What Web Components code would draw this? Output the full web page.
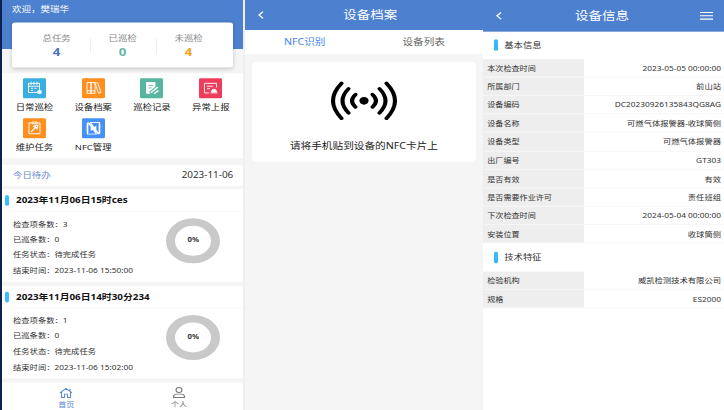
<!DOCTYPE html>
<html lang="zh-CN">
<head>
<meta charset="UTF-8">
<title>设备巡检</title>
<style>
body{
    margin: 0;
    width: 724px;
    height: 410px;
    overflow: hidden;
    background: #f5f5f5;
    font-family: "Noto Sans", "Noto Sans CJK SC", sans-serif;
}
</style>
</head>
<body>
<screen-board>
    <home-screen></home-screen>
    <archive-screen></archive-screen>
    <info-screen></info-screen>
</screen-board>

<script>
class baseElement extends HTMLElement{
    constructor(){
        super();
        this.attachShadow({mode:'open'});
    }
    connectedCallback(){
        let box= document.createElement('template')
        box.innerHTML=`<style>*{box-sizing:border-box}</style>` + this.render();
        this.shadowRoot.replaceChildren(box.content.cloneNode(true));
    }
}

// three screens side by side, squeezed a little in height
class screenBoard extends baseElement{
    render(){
        return `
        <style>
        :host{
            display: block;
            height: 410px;
            overflow: hidden;
        }
        .board{
            display: flex;
            width: 724px;
            height: 492px;
            padding-left: 2px;
            background: linear-gradient(90deg, #0b2250 2px, #eeeff1 2px);
            transform: scaleY(.83333);
            transform-origin: 0 0;
            line-height: 1;
            color: #333;
        }
        ::slotted(home-screen){ flex: 0 0 241px; margin-right: 2px; }
        ::slotted(archive-screen){ flex: 0 0 238px; }
        ::slotted(info-screen){ flex: 1; }
        </style>
        <div class="board"><slot></slot></div>`
    }
}
customElements.define('screen-board',screenBoard)

class titleBar extends baseElement{
    render(){
        return `
        <style>
        :host{
            display: flex;
            box-sizing: border-box;
            align-items: center;
            height: 36px;
            padding: 0 0 0 12px;
            background: #4d80cf;
            color: white;
        }
        .side{ flex: 1; display: flex; }
        .right{ justify-content: flex-end; }
        .name{ padding-top: 1px; font-size: 13.5px; white-space: nowrap; }
        :host([menu]) .name{ margin-right: 4px; }
        </style>
        <div class="side">
            <svg width="8" height="10" viewBox="0 0 8 10" fill="none" stroke="white" stroke-width="1.4"><path d="M6 1 2 5l4 4"/></svg>
        </div>
        <div class="name"><slot></slot></div>
        <div class="side right">${this.hasAttribute('menu') ? `
            <svg width="13" height="10" viewBox="0 0 13 10" stroke="white" stroke-width="1.3"><path d="M0 1h13M0 5h13M0 9h13"/></svg>` : ''}
        </div>`
    }
}
customElements.define('title-bar',titleBar)

class statItem extends baseElement{
    render(){
        return `
        <style>
        :host{
            display: flex;
            flex-direction: column;
            align-items: center;
            gap: 5px;
            width: 66px;
            padding-top: 3px;
            font-size: 9.4px;
            color: #888;
        }
        b{ font-size: 13.2px; color: ${this.getAttribute('color')}; }
        </style>
        <slot></slot><b>${this.getAttribute('count')}</b>`
    }
}
customElements.define('stat-item',statItem)

const icons = {
    daily: '<rect x="5.5" y="6" width="11" height="11"/><path d="M5.5 9.500h11M8 4v4M11 4v4M14 4v4M8 12h2M11.500 12h2M8 14.500h2"/><circle cx="16.500" cy="16.500" r="2.500" fill="white" stroke="none"/>',
    archive: '<path d="M5 5h4v13H5zM9 5h4v13H9zM5 15h8M13 6l2.500-1 3.500 12-2.500 1z"/>',
    record: '<path d="M6.500 5H15v6l-5 7H6.500z" fill="white"/><path d="M8.500 8.500h4.500M8.500 11.500h3" stroke="#58b5a0"/><path d="m10.500 17.500 7.500-7" stroke="#58b5a0" stroke-width="4"/><path d="m11 17 7-6.500M14 18.500l4.500-4" stroke-width="1.500"/>',
    report: '<path d="M17.500 11V6h-12v11.500H10M8 9.500h6M8 12.500h3"/><path d="M11.500 17.500h7M12.500 16.500a2.500 3.500 0 0 1 5 0z" fill="white"/>',
    task: '<path d="M9 5.500H6v13h11v-13h-3M9 4.500h5v2H9z"/><path d="m8 16.500 4-5M10 9l4.500 4M12 9l3-1-1 4z" stroke-width="1.200"/>',
    nfc: '<path d="M5.500 17.500V7q0-2 1.500-1l6.500 10.500V9.500M17.500 6.500V17q0 2-1.500 1L9.500 7.500v7" stroke-width="1.700"/><path d="M8 5h9.500v2M5.500 17v2h9.500" stroke-width="1.100"/>'
}

class menuItem extends baseElement{
    render(){
        return `
        <style>
        :host{
            display: flex;
            flex-direction: column;
            align-items: center;
            gap: 6px;
            font-size: 9.4px;
            color: #222;
        }
        svg{
            display: block;
            width: 23px;
            height: 24px;
            border-radius: 1.5px;
            background: ${this.getAttribute('color')};
        }
        </style>
        <svg viewBox="0 0 23 24" fill="none" stroke="white" stroke-width="1">${icons[this.getAttribute('icon')]}</svg>
        <span><slot></slot></span>`
    }
}
customElements.define('menu-item',menuItem)

class taskCard extends baseElement{
    render(){
        return `
        <style>
        :host{
            display: block;
            box-sizing: border-box;
            height: 110.5px;
            background: white;
        }
        .head{
            display: flex;
            align-items: center;
            gap: 7px;
            height: 27px;
            padding: 1px 0 0 3px;
            border-bottom: 1px solid #f6f6f6;
            font-size: 9.85px;
            font-weight: bold;
            color: #111;
            white-space: nowrap;
        }
        .head i{ width: 4px; height: 13px; border-radius: 2px; background: #3cbcfb; }
        .body{
            display: flex;
            justify-content: space-between;
            padding: 5px 23px 0 11px;
            font-size: 8.3px;
        }
        .lines{ line-height: 18.9px; padding-top: .5px; white-space: nowrap; }
        .ring{
            display: flex;
            align-items: center;
            justify-content: center;
            width: 54px;
            height: 54px;
            margin-top: 3px;
            border: 9px solid #c9c9c9;
            border-radius: 50%;
            font-weight: bold;
            font-size: 7.8px;
        }
        </style>
        <div class="head"><i></i><span>${this.getAttribute('name')}</span></div>
        <div class="body">
            <div class="lines">
                <div>检查项条数：${this.getAttribute('total')}</div>
                <div>已巡条数：0</div>
                <div>任务状态：待完成任务</div>
                <div>结束时间：${this.getAttribute('end')}</div>
            </div>
            <div class="ring">0%</div>
        </div>`
    }
}
customElements.define('task-card',taskCard)

class homeScreen extends baseElement{
    render(){
        return `
        <style>
        :host{
            display: flex;
            flex-direction: column;
            background: #f5f5f5;
        }
        .top{
            height: 88px;
            padding: 6px 10px 0;
            background: linear-gradient(#4d80cf 59px, #f5f5f5 59px);
        }
        .hello{ font-size: 9.5px; line-height: 12px; color: white; }
        .stats{
            display: flex;
            justify-content: center;
            align-items: center;
            height: 54px;
            margin-top: 8.5px;
            border-radius: 3px;
            background: white;
            box-shadow: 0 1px 5px rgba(0,0,0,.2);
        }
        stat-item + stat-item{ background: linear-gradient(#eee,#eee) 0 60%/1px 18px no-repeat; }
        .menu{
            display: grid;
            grid-template-columns: repeat(4, 58.8px);
            grid-auto-rows: 48px;
            height: 102px;
            padding: 6px 3px 0;
            background: white;
        }
        .today{
            display: flex;
            align-items: center;
            justify-content: space-between;
            height: 25px;
            margin: 8px 0 4px;
            padding: 1px 10px 0 11px;
            background: white;
            font-size: 9.9px;
        }
        .today span{ font-size: 9.4px; color: #6689cf; }
        task-card{ margin-bottom: 5.5px; }
        .tabs{
            display: flex;
            flex: 1;
            padding: 5px 8px 0;
            background: white;
            font-size: 8px;
            color: #777;
        }
        .tabs div{
            display: flex;
            flex: 1;
            flex-direction: column;
            align-items: center;
            gap: 3px;
        }
        .tabs .on{ color: #5e8bd8; }
        </style>
        <div class="top">
            <div class="hello">欢迎，樊瑞华</div>
            <div class="stats">
                <stat-item count="4" color="#4a72c4">总任务</stat-item>
                <stat-item count="0" color="#62b5a5">已巡检</stat-item>
                <stat-item count="4" color="#faa21b">未巡检</stat-item>
            </div>
        </div>
        <div class="menu">
            <menu-item icon="daily" color="#3aaee0">日常巡检</menu-item>
            <menu-item icon="archive" color="#ff8f1f">设备档案</menu-item>
            <menu-item icon="record" color="#58b5a0">巡检记录</menu-item>
            <menu-item icon="report" color="#ee3d5b">异常上报</menu-item>
            <menu-item icon="task" color="#ff8f1f">维护任务</menu-item>
            <menu-item icon="nfc" color="#4790fb">NFC管理</menu-item>
        </div>
        <div class="today"><span>今日待办</span>2023-11-06</div>
        <task-card name="2023年11月06日15时ces" total="3" end="2023-11-06 15:50:00"></task-card>
        <task-card name="2023年11月06日14时30分234" total="1" end="2023-11-06 15:02:00"></task-card>
        <div class="tabs">
            <div class="on">
                <svg width="14" height="14" viewBox="0 0 14 14" fill="none" stroke="currentColor" stroke-width="1.1"><path d="M1 7.500 7 2l6 5.500M2.500 6.500V13H5.500V9h3v4h3V6.500M11 5V2.500"/></svg>
                首页
            </div>
            <div>
                <svg width="14" height="14" viewBox="0 0 14 14" fill="none" stroke="currentColor" stroke-width="1.1"><circle cx="7" cy="4" r="3"/><path d="M1.500 13v-1.500Q2 9 5 9h4q3 0 3.500 2.500V13z"/></svg>
                个人
            </div>
        </div>`
    }
}
customElements.define('home-screen',homeScreen)

class archiveScreen extends baseElement{
    render(){
        return `
        <style>
        :host{ display: block; background: #f5f5f5; }
        .tabs{
            display: flex;
            align-items: center;
            height: 28.5px;
            padding-top: 1px;
            background: white;
            font-size: 10.6px;
            text-align: center;
            color: #666;
        }
        .tabs div{ flex: 1; }
        .tabs .on{ color: #4585f0; }
        .card{
            display: flex;
            flex-direction: column;
            align-items: center;
            gap: 25px;
            height: 120px;
            margin: 9px 7.5px 0 7px;
            padding-top: 23px;
            border-radius: 5px;
            background: white;
            font-size: 10.65px;
            color: #222;
            white-space: nowrap;
        }
        </style>
        <title-bar>设备档案</title-bar>
        <div class="tabs"><div class="on">NFC识别</div><div>设备列表</div></div>
        <div class="card">
            <svg width="68" height="48" viewBox="0 0 68 48" fill="none" stroke="black" stroke-width="4" stroke-linecap="round">
                <circle cx="34" cy="24" r="4.600" fill="black" stroke="none"/>
                <path d="M25.500 16.500q-7 7.500 0 15M18.500 9.500q-12 14.500 0 29M11.500 3q-17 21 0 42"/>
                <path d="M42.500 16.500q7 7.500 0 15M49.500 9.500q12 14.500 0 29M56.500 3q17 21 0 42"/>
            </svg>
            <span>请将手机贴到设备的NFC卡片上</span>
        </div>`
    }
}
customElements.define('archive-screen',archiveScreen)

class infoGroup extends baseElement{
    render(){
        return `
        <style>
        :host{ display: block; }
        .head{
            display: flex;
            align-items: center;
            gap: 6px;
            height: 33.5px;
            padding-left: 11px;
            font-size: 9.4px;
        }
        .head i{ width: 4px; height: 14px; border-radius: 2px; background: #36b9fb; }
        </style>
        <div class="head"><i></i>${this.getAttribute('name')}</div>
        <slot></slot>`
    }
}
customElements.define('info-group',infoGroup)

class infoRow extends baseElement{
    render(){
        return `
        <style>
        :host{
            display: flex;
            box-sizing: border-box;
            height: 22.12px;
            border-bottom: 1px solid #f6f6f6;
            font-size: 8.1px;
            line-height: 22px;
            white-space: nowrap;
        }
        .label{ width: 101px; padding-left: 4px; background: #eee; }
        .value{ flex: 1; padding-right: 3px; text-align: right; font-size: 8.3px; }
        </style>
        <div class="label">${this.getAttribute('label')}</div>
        <div class="value"><slot></slot></div>`
    }
}
customElements.define('info-row',infoRow)

class infoScreen extends baseElement{
    render(){
        return `
        <style>
        :host{ display: block; background: white; }
        title-bar{ height: 37.5px; padding-right: 11px; }
        </style>
        <title-bar menu>设备信息</title-bar>
        <info-group name="基本信息">
            <info-row label="本次检查时间">2023-05-05 00:00:00</info-row>
            <info-row label="所属部门">前山站</info-row>
            <info-row label="设备编码">DC20230926135843QG8AG</info-row>
            <info-row label="设备名称">可燃气体报警器-收球筒侧</info-row>
            <info-row label="设备类型">可燃气体报警器</info-row>
            <info-row label="出厂编号">GT303</info-row>
            <info-row label="是否有效">有效</info-row>
            <info-row label="是否需要作业许可">责任班组</info-row>
            <info-row label="下次检查时间">2024-05-04 00:00:00</info-row>
            <info-row label="安装位置">收球筒侧</info-row>
        </info-group>
        <info-group name="技术特征">
            <info-row label="检验机构">威凯检测技术有限公司</info-row>
            <info-row label="规格">ES2000</info-row>
        </info-group>`
    }
}
customElements.define('info-screen',infoScreen)
</script>
</body>
</html>
